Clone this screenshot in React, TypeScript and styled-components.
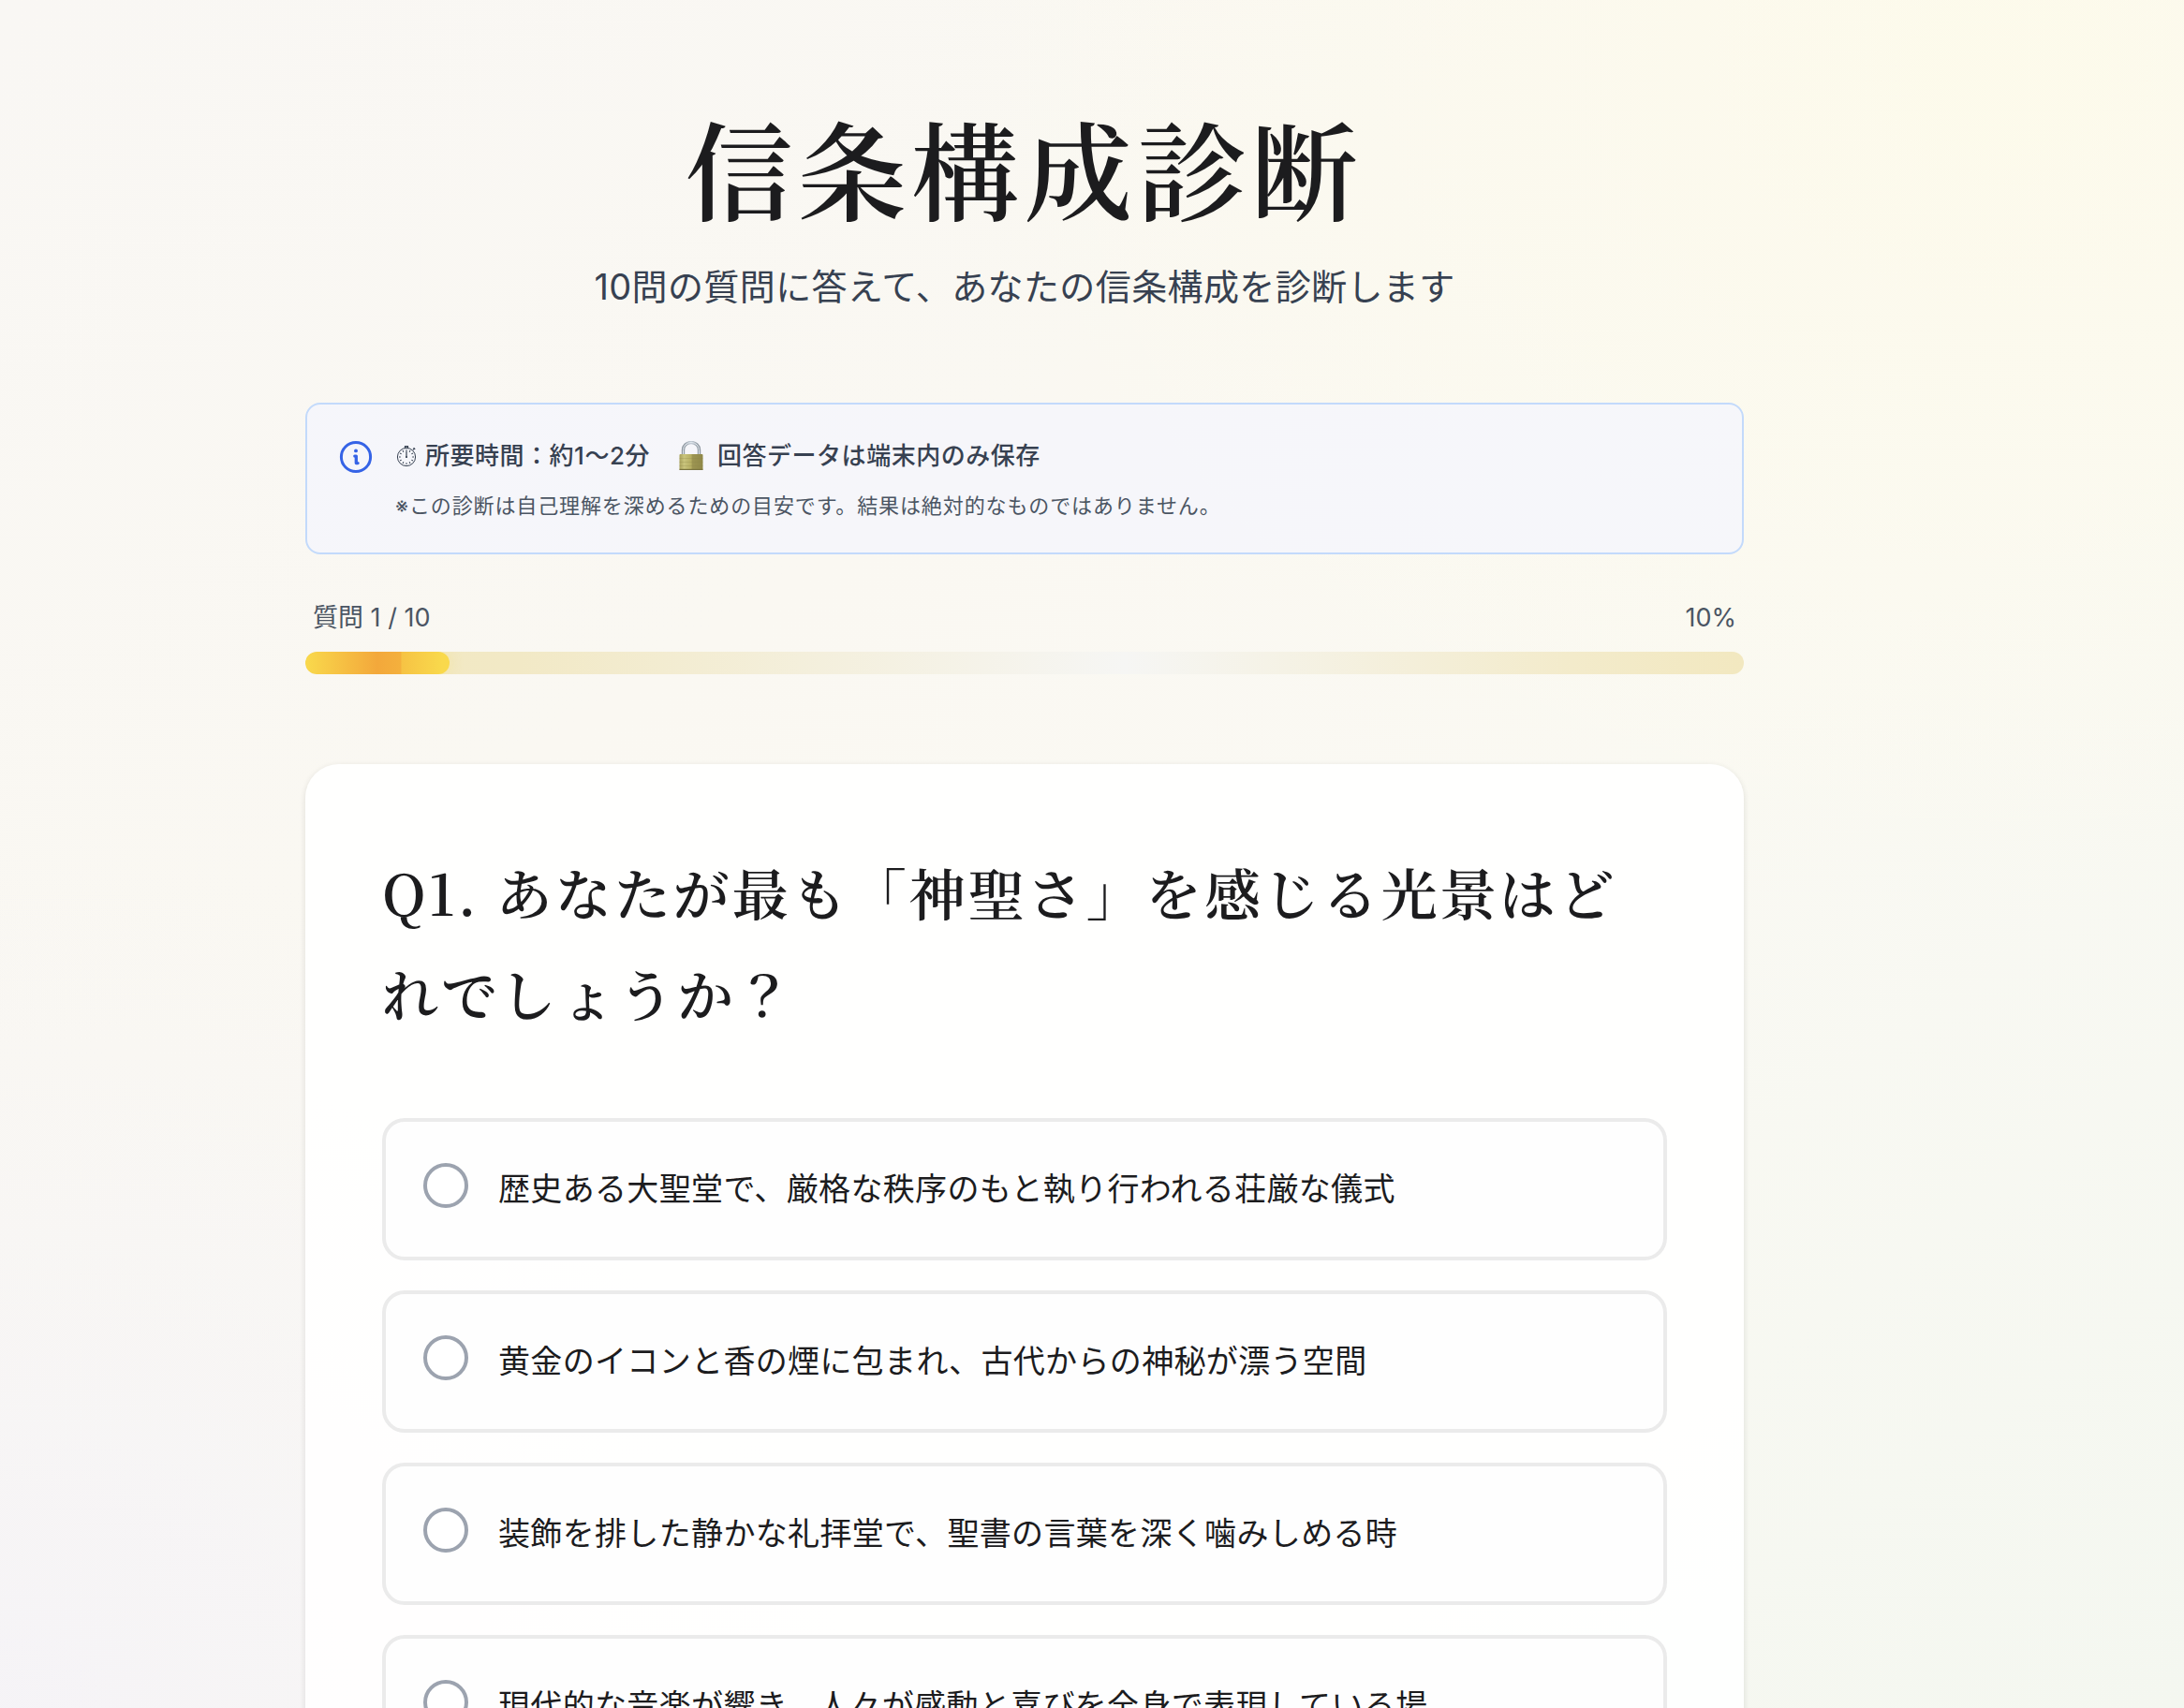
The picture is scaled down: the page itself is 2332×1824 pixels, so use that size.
import React, { useState } from "react";
import styled, { createGlobalStyle } from "styled-components";

const sans = `Inter, "Noto Sans CJK JP", sans-serif`;
const serif = `"Noto Serif JP", "Noto Serif CJK JP", "Liberation Serif", "Noto Sans CJK JP", serif`;

const GlobalStyle = createGlobalStyle`
  *, *::before, *::after { box-sizing: border-box; }
  html { scrollbar-width: none; }
  body {
    margin: 0;
    font-family: ${sans};
    color: #1c1c1e;
    background:
      radial-gradient(ellipse 50% 50% at 92% 4%, rgba(254, 251, 232, 0.7), rgba(254, 251, 232, 0) 100%),
      radial-gradient(ellipse 50% 50% at 0% 100%, rgba(245, 243, 247, 0.9), rgba(245, 243, 247, 0) 100%),
      linear-gradient(145deg, #f9f7f4 0%, #faf8f2 35%, #faf9f3 60%, #f4f7f0 100%);
    background-attachment: fixed;
  }
  h1, h2, p { margin: 0; }
`;

const Page = styled.div`
  min-height: 100vh;
  padding: 98px 144px 96px 0;
`;

const Container = styled.main`
  max-width: 1536px;
  margin: 0 auto;
`;

const Header = styled.header`
  margin-bottom: 90px;
  text-align: center;
`;

const Title = styled.h1`
  margin-bottom: 14px;
  font-family: ${serif};
  font-size: 115px;
  font-weight: 600;
  line-height: 160px;
  letter-spacing: 0.05em;
`;

const Subtitle = styled.p`
  font-size: 38px;
  line-height: 68px;
  letter-spacing: 0.01em;
  color: #374151;
`;

const Notice = styled.section`
  display: flex;
  align-items: flex-start;
  gap: 24px;
  margin-bottom: 44px;
  padding: 32px 34px 30px;
  border: 2px solid #c3dafb;
  border-radius: 16px;
  background: rgba(244, 246, 251, 0.85);
`;

const InfoIcon = styled.svg`
  flex: none;
  width: 36px;
  height: 36px;
  margin-top: 6px;
`;

const Facts = styled.p`
  display: flex;
  flex-wrap: wrap;
  column-gap: 28px;
  margin-bottom: 10px;
  font-size: 26px;
  font-weight: 500;
  line-height: 46px;
  letter-spacing: 0.02em;
  color: #374151;
`;

const Fact = styled.span<{ $gap: number }>`
  display: inline-flex;
  align-items: center;
  gap: ${(p) => p.$gap}px;
`;

const FactIcon = styled.svg<{ $size: number }>`
  flex: none;
  width: ${(p) => p.$size}px;
  height: ${(p) => p.$size}px;
`;

const Remark = styled.p`
  font-size: 22px;
  line-height: 40px;
  letter-spacing: 0.04em;
  color: #4b5563;
`;

const ProgressLabels = styled.div`
  display: flex;
  justify-content: space-between;
  margin-bottom: 12px;
  padding: 0 8px;
  font-size: 27px;
  line-height: 48px;
  color: #4b5563;
`;

const Track = styled.div`
  height: 24px;
  margin-bottom: 96px;
  overflow: hidden;
  border-radius: 12px;
  background: linear-gradient(90deg, #f2e8c0 0%, #f2e9c6 15%, #f6f6f4 57%, #f3ebcb 88%, #f2e8c0 100%);
`;

const Fill = styled.div`
  height: 100%;
  border-radius: 12px;
  background: linear-gradient(90deg, #f9d94c 0%, #f3a83b 50%, #f4b03d 66%, #f6c344 67%, #f9d94c 95%);
  box-shadow: 0 0 16px rgba(249, 217, 76, 0.3);
`;

const Card = styled.form`
  padding: 82px;
  border-radius: 36px;
  background: rgba(255, 255, 255, 0.9);
  box-shadow: 0 2px 6px rgba(50, 50, 50, 0.14);
`;

const Question = styled.h2`
  margin-bottom: 80px;
  font-family: ${serif};
  font-size: 60px;
  font-weight: 600;
  line-height: 108px;
  letter-spacing: 0.05em;
`;

const Options = styled.div`
  display: grid;
  gap: 32px;
`;

const Option = styled.label`
  display: flex;
  align-items: flex-start;
  gap: 32px;
  padding: 40px;
  border: 4px solid #ebebeb;
  border-radius: 24px;
  background: #fefefe;
  font-size: 34px;
  line-height: 64px;
  letter-spacing: 0.01em;
  cursor: pointer;
`;

const Radio = styled.input`
  appearance: none;
  flex: none;
  width: 48px;
  height: 48px;
  margin: 4px 0 0;
  border: 4px solid #9ca3af;
  border-radius: 50%;
  background: #fff;

  &:checked {
    border-color: #f3a83b;
    box-shadow: inset 0 0 0 8px #fff, inset 0 0 0 24px #f3a83b;
  }
`;

const answers = [
  "歴史ある大聖堂で、厳格な秩序のもと執り行われる荘厳な儀式",
  "黄金のイコンと香の煙に包まれ、古代からの神秘が漂う空間",
  "装飾を排した静かな礼拝堂で、聖書の言葉を深く噛みしめる時",
  "現代的な音楽が響き、人々が感動と喜びを全身で表現している場",
];

function Stopwatch() {
  const ticks = Array.from({ length: 12 }, (_, i) => i * 30);
  return (
    <FactIcon $size={24} viewBox="0 0 24 24" fill="none" stroke="#374151" aria-hidden="true">
      <circle cx="12" cy="13" r="9.6" strokeWidth="1" />
      <path d="M10.500 1.500h3v1.600h-3zM19 5.400l1.400-1.400M19.600 3.200l1.600 1.600" strokeWidth="1.200" />
      {ticks.map((a) => (
        <path key={a} d="M12 5v1.800" strokeWidth="1" transform={`rotate(${a} 12 13)`} />
      ))}
      <path d="M12 7V14" strokeWidth="1.200" />
      <circle cx="12" cy="13" r="0.900" fill="#374151" stroke="none" />
    </FactIcon>
  );
}

function Padlock() {
  return (
    <FactIcon $size={32} viewBox="0 0 32 32" aria-hidden="true">
      <defs>
        <linearGradient id="brass" x1="0" x2="1" y1="0" y2="0">
          <stop offset="0" stopColor="#a9a25c" />
          <stop offset="0.2" stopColor="#c9c47c" />
          <stop offset="0.5" stopColor="#b5ae62" />
          <stop offset="0.55" stopColor="#9d9552" />
          <stop offset="1" stopColor="#8f8848" />
        </linearGradient>
        <linearGradient id="steel" x1="0" x2="1" y1="0" y2="0">
          <stop offset="0" stopColor="#8d969f" />
          <stop offset="0.5" stopColor="#c2cbd5" />
          <stop offset="1" stopColor="#8d969f" />
        </linearGradient>
      </defs>
      <path d="M7.500 17V9.500a8.500 8 0 0 1 17 0V17" fill="none" stroke="url(#steel)" strokeWidth="3.400" />
      <path d="M7.500 17V9.500a8.500 8 0 0 1 17 0V17" fill="none" stroke="#e3e9ef" strokeWidth="1" />
      <rect x="3.500" y="14" width="25" height="17" rx="1" fill="url(#brass)" />
      <path d="M3.500 18.500h25M3.500 22.500h25M3.500 26.500h25" stroke="#8a8346" strokeOpacity="0.25" strokeWidth="1" />
      <path d="M3.500 30.400h25" stroke="#7a7440" strokeWidth="1.200" />
    </FactIcon>
  );
}

export default function App() {
  const [choice, setChoice] = useState<number | null>(null);
  const current = 1;
  const total = 10;
  const percent = (current / total) * 100;

  return (
    <>
      <GlobalStyle />
      <Page lang="ja">
        <Container>
          <Header>
            <Title>信条構成診断</Title>
            <Subtitle>10問の質問に答えて、あなたの信条構成を診断します</Subtitle>
          </Header>

          <Notice>
            <InfoIcon viewBox="0 0 24 24" fill="none" stroke="#3563e6" strokeWidth="2" strokeLinecap="round" strokeLinejoin="round" aria-hidden="true">
              <circle cx="12" cy="12" r="10.4" />
              <path d="M11.200 11.400h1v5h1.200" strokeWidth="2.200" />
              <path d="M12 7.600h.01" strokeWidth="2.600" />
            </InfoIcon>
            <div>
              <Facts>
                <Fact $gap={8}><Stopwatch />所要時間：約1〜2分</Fact>
                <Fact $gap={12}><Padlock />回答データは端末内のみ保存</Fact>
              </Facts>
              <Remark>※この診断は自己理解を深めるための目安です。結果は絶対的なものではありません。</Remark>
            </div>
          </Notice>

          <ProgressLabels>
            <span>質問 {current} / {total}</span>
            <span>{percent}%</span>
          </ProgressLabels>
          <Track role="progressbar" aria-label="進捗" aria-valuenow={percent} aria-valuemin={0} aria-valuemax={100}>
            <Fill style={{ width: `${percent}%` }} />
          </Track>

          <Card>
            <Question id="question">Q1. あなたが最も「神聖さ」を感じる光景はどれでしょうか？</Question>
            <Options role="radiogroup" aria-labelledby="question">
              {answers.map((text, i) => (
                <Option key={text} htmlFor={`answer-${i}`}>
                  <Radio id={`answer-${i}`} type="radio" name="answer" checked={choice === i} onChange={() => setChoice(i)} />
                  <span>{text}</span>
                </Option>
              ))}
            </Options>
          </Card>
        </Container>
      </Page>
    </>
  );
}
